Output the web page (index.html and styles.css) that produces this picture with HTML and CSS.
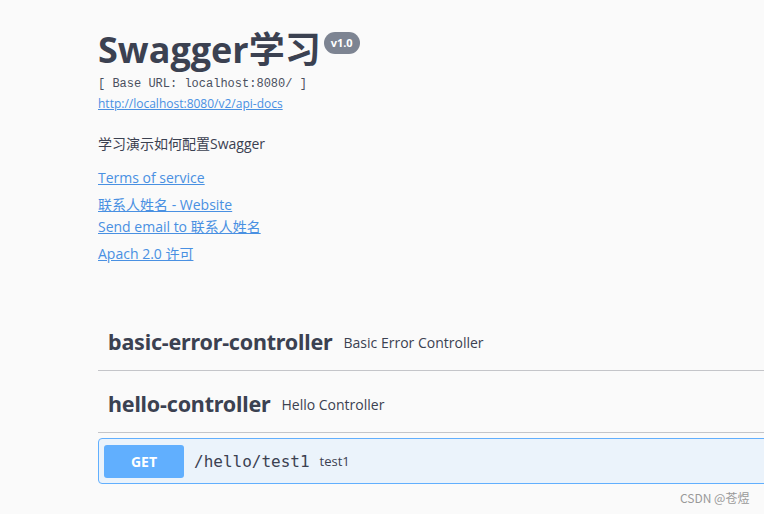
FILE: index.html
```html
<!DOCTYPE html>
<html>
<head>
<meta charset="utf-8">
<link rel="stylesheet" href="styles.css">
</head>
<body>
<div class="page">
  <div class="info">
    <div class="title-row">
      <h2 class="title">Swagger学习</h2>
      <span class="version">v1.0</span>
    </div>
    <div class="base-url">[ Base URL: localhost:8080/ ]</div>
    <a class="spec-link" href="#">http://localhost:8080/v2/api-docs</a>
    <p class="desc">学习演示如何配置Swagger</p>
    <a class="info-link tos" href="#">Terms of service</a>
    <a class="info-link" href="#">联系人姓名 - Website</a>
    <a class="info-link" href="#">Send email to 联系人姓名</a>
    <a class="info-link lic" href="#">Apach 2.0 许可</a>
  </div>
  <div class="tags">
    <div class="tag">
      <span class="tag-name">basic-error-controller</span>
      <span class="tag-desc">Basic Error Controller</span>
    </div>
    <div class="tag">
      <span class="tag-name">hello-controller</span>
      <span class="tag-desc">Hello Controller</span>
    </div>
    <div class="opblock">
      <span class="method">GET</span>
      <span class="path">/hello/test1</span>
      <span class="summary">test1</span>
    </div>
  </div>
</div>
<div class="watermark">CSDN @苍煜</div>
</body>
</html>
```

FILE: styles.css
```css
html, body {
  margin: 0;
  padding: 0;
  background: #fafafa;
  overflow: hidden;
  width: 764px;
  height: 514px;
}
body {
  font-family: "Open Sans", "Noto Sans CJK SC", sans-serif;
  color: #3b4151;
  position: relative;
}
.page {
  margin-left: 98px;
  width: 760px;
  padding-top: 26px;
}
.title-row {
  display: flex;
  align-items: flex-start;
}
.title {
  margin: 0;
  font-size: 36px;
  font-weight: 700;
  line-height: 48px;
  color: #3b4151;
  font-family: "Open Sans", "Noto Sans CJK SC", sans-serif;
}
.version {
  margin-left: 3px;
  margin-top: 6px;
  background: #7d8492;
  color: #fff;
  font-size: 11px;
  font-weight: 700;
  border-radius: 57px;
  padding: 3px 7px 4px;
  line-height: 15px;
}
.base-url {
  font-family: "Liberation Mono", monospace;
  font-size: 12px;
  color: #4a5060;
  line-height: 14px;
  margin-top: 3px;
}
.spec-link {
  display: block;
  font-size: 12px;
  color: #4990e2;
  line-height: 16px;
  margin-top: 5px;
}
.desc {
  margin: 22px 0 0;
  font-size: 14px;
  line-height: 20px;
}
.info-link {
  display: block;
  font-size: 14px;
  color: #4990e2;
  line-height: 22px;
}
.tos { margin-top: 13px; margin-bottom: 5px; }
.lic { margin-top: 5px; }
.tags {
  margin-top: 49px;
}
.tag {
  display: flex;
  align-items: center;
  height: 57px;
  box-sizing: border-box;
  padding: 10px 20px 10px 10px;
  border-bottom: 1px solid #c4c5c9;
  margin-bottom: 5px;
}
.tag-name {
  font-size: 21.5px;
  font-weight: 700;
  font-family: "Noto Sans", "Open Sans", sans-serif;
  line-height: 30px;
  letter-spacing: -0.2px;
}
.tag-desc {
  font-size: 14px;
  margin-left: 11px;
}
.opblock {
  display: flex;
  align-items: center;
  height: 46px;
  box-sizing: border-box;
  padding: 0 5px;
  border: 1px solid #61affe;
  border-radius: 4px;
  background: #ebf3fb;
}
.method {
  width: 80px;
  height: 33px;
  box-sizing: border-box;
  background: #61affe;
  color: #fff;
  font-weight: 700;
  font-size: 14px;
  border-radius: 3px;
  display: flex;
  align-items: center;
  justify-content: center;
}
.path {
  font-family: "DejaVu Sans Mono", monospace;
  font-size: 16px;
  margin-left: 10px;
}
.summary {
  font-size: 13px;
  margin-left: 10px;
}
.watermark {
  position: absolute;
  left: 680px;
  top: 489px;
  font-size: 12px;
  color: #999;
  font-family: "Noto Sans CJK SC", sans-serif;
}
```
